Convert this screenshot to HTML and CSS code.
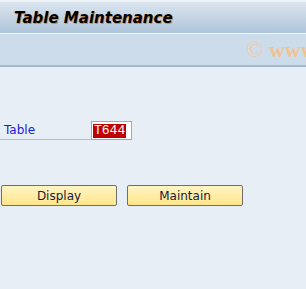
FILE: index.html
```html
<!DOCTYPE html>
<html lang="en">
<head>
    <meta charset="UTF-8">
    <title>Table Maintenance</title>
    <link rel="stylesheet" href="styles.css">
</head>
<body>
    <div class="title-bar">
        <h1>Table Maintenance</h1>
    </div>
    <div class="toolbar">
        <span class="watermark"><span class="copy">&copy;</span> www</span>
    </div>
    <div class="content">
        <div class="field-row">
            <label class="field-label">Table</label>
            <span class="field-input"><span class="field-value">T644</span></span>
        </div>
        <div class="button-row">
            <button class="sap-button">Display</button>
            <button class="sap-button">Maintain</button>
        </div>
    </div>
</body>
</html>
```

FILE: styles.css
```css
body {
    margin: 0;
    font-family: Tahoma, "DejaVu Sans", sans-serif;
    background: #e8eef6;
    height: 289px;
    overflow: hidden;
}
.title-bar {
    height: 31px;
    border-top: 2px solid #eef3f8;
    border-bottom: 1px solid #f4f7fb;
    background: linear-gradient(to bottom, #dbe5ef, #aec4da);
    padding-left: 14px;
    display: flex;
    align-items: center;
}
.title-bar h1 {
    margin: 0;
    font-family: "DejaVu Sans", sans-serif;
    font-size: 15px;
    font-weight: bold;
    font-style: italic;
    color: #000;
    text-shadow: 1px 1px 0 #c89050;
}
.toolbar {
    height: 31px;
    background: #cddceb;
    border-bottom: 2px solid #a3b7cd;
    display: flex;
    align-items: center;
    justify-content: flex-start;
    padding-left: 246px;
    overflow: hidden;
}
.watermark {
    font-family: "Liberation Serif", serif;
    font-size: 22px;
    font-weight: bold;
    color: #f0c490;
    white-space: nowrap;
}
.watermark .copy {
    font-weight: normal;
    font-size: 23px;
    color: #f2cca2;
}
.content {
    padding-top: 54px;
}
.field-row {
    display: flex;
    align-items: flex-end;
    height: 19px;
}
.field-label {
    width: 87px;
    padding-left: 4px;
    font-size: 12px;
    color: #1a1ae0;
    border-bottom: 1px solid #b8bcc2;
    line-height: 18px;
    height: 18px;
}
.field-input {
    width: 38px;
    height: 17px;
    border: 1px solid #a8a8a8;
    background: #fff;
    display: flex;
    align-items: center;
    padding-left: 1px;
}
.field-value {
    background: #c00000;
    color: #fff;
    font-family: "Liberation Mono", monospace;
    font-size: 13px;
    line-height: 14px;
    padding: 0 1px;
}
.button-row {
    display: flex;
    gap: 10px;
    padding-left: 1px;
    margin-top: 45px;
}
.sap-button {
    width: 116px;
    height: 21px;
    border: 1px solid #6e6e6e;
    border-radius: 2px;
    background: linear-gradient(to bottom, #fff4c4, #ffe68a);
    font-family: Tahoma, "DejaVu Sans", sans-serif;
    font-size: 12px;
    color: #1a1a3a;
    padding: 0;
}
```
